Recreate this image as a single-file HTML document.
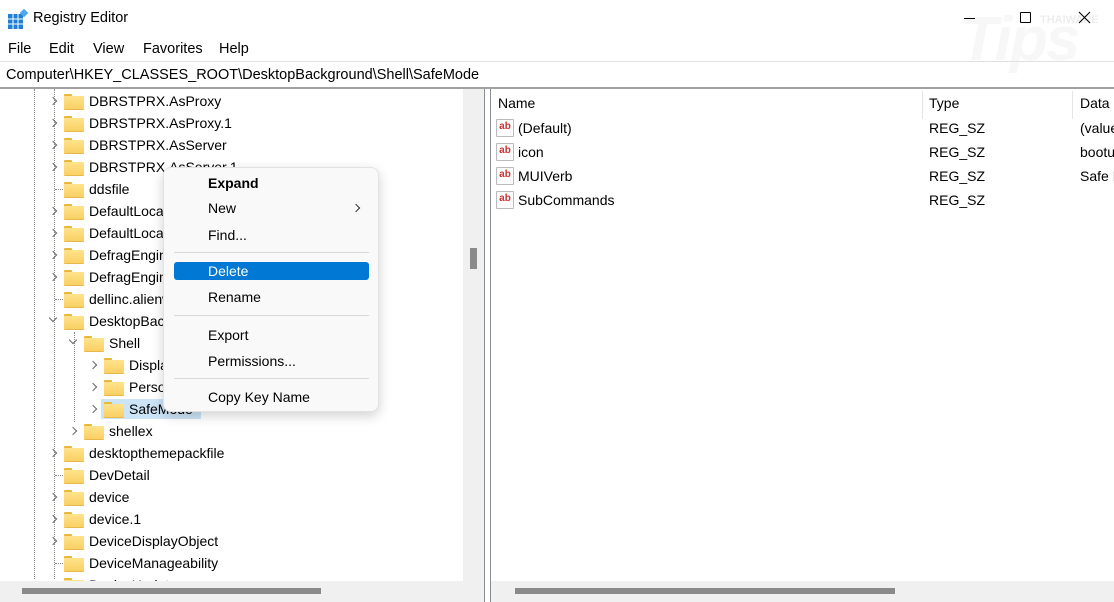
<!DOCTYPE html><html><head><style>
*{margin:0;padding:0;box-sizing:border-box}
body{width:1114px;height:602px;background:#fff;font-family:"Liberation Sans",sans-serif;font-size:14px;color:#000;position:relative;overflow:hidden}
.a{position:absolute;white-space:nowrap}
.f{position:absolute;width:20px;height:15px}
.f:before{content:"";position:absolute;left:0;top:0;width:8px;height:3px;background:#e9b73a;border-radius:1px 1px 0 0}
.f:after{content:"";position:absolute;left:0;top:2px;width:20px;height:13px;background:linear-gradient(#ffe38c,#f9d064);border-bottom:1px solid #e8b84a;border-radius:1px}
.ch{position:absolute;width:6px;height:6px;border-right:1.3px solid #666;border-bottom:1.3px solid #666}
.r{transform:rotate(-45deg)}.d{transform:rotate(45deg)}
.vl{position:absolute;border-left:1px dotted #888;width:0}
.hl{position:absolute;border-top:1px dotted #888;height:0}
.m{position:absolute;left:208px;font-size:14px}
.sep{position:absolute;left:174px;width:195px;height:1px;background:#d8d8d8}
.ab{position:absolute;width:18px;height:18px;background:#fff;border:1px solid #bbb;font-size:10px;font-weight:bold;color:#c33;text-align:center;line-height:13px;border-radius:1px}
</style></head><body>
<div class="a" style="left:960px;top:4px;font-size:62px;font-style:italic;font-weight:bold;color:#f7f7f7;letter-spacing:-2px">Tips</div>
<div class="a" style="left:1040px;top:14px;font-size:11px;font-weight:bold;color:#ededed">THAIWARE</div>
<svg class="a" style="left:8px;top:9px" width="20" height="20"><rect x="0" y="5" width="15" height="15" fill="#1f7fd6"/><g stroke="#fff" stroke-width="1"><line x1="5" y1="5" x2="5" y2="20"/><line x1="10" y1="5" x2="10" y2="20"/><line x1="0" y1="10" x2="15" y2="10"/><line x1="0" y1="15" x2="15" y2="15"/></g><rect x="13" y="1" width="6" height="6" fill="#4aa8f0" transform="rotate(45 16 4)"/></svg>
<div class="a" style="left:33px;top:10px;font-size:14.5px">Registry Editor</div>
<div class="a" style="left:964px;top:18px;width:11px;height:1px;background:#000"></div>
<div class="a" style="left:1020px;top:12px;width:11px;height:11px;border:1px solid #000;border-radius:1px"></div>
<svg class="a" style="left:1078px;top:11px" width="13" height="13"><path d="M1 1L12 12M12 1L1 12" stroke="#000" stroke-width="1.1"/></svg>
<div class="a" style="left:8px;top:41px;font-size:14.5px">File</div>
<div class="a" style="left:49px;top:41px;font-size:14.5px">Edit</div>
<div class="a" style="left:93px;top:41px;font-size:14.5px">View</div>
<div class="a" style="left:143px;top:41px;font-size:14.5px">Favorites</div>
<div class="a" style="left:219px;top:41px;font-size:14.5px">Help</div>
<div class="a" style="left:0;top:61px;width:1114px;height:1px;background:#e0e0e0"></div>
<div class="a" style="left:6px;top:67px;font-size:14.5px">Computer\HKEY_CLASSES_ROOT\DesktopBackground\Shell\SafeMode</div>
<div class="a" style="left:0;top:87px;width:1114px;height:2px;background:#a0a0a0"></div>
<div class="vl" style="left:34px;top:89px;height:490px"></div>
<div class="vl" style="left:54px;top:89px;height:490px"></div>
<div class="vl" style="left:74px;top:332px;height:90px"></div>
<div class="hl" style="left:55px;top:189px;width:8px"></div>
<div class="hl" style="left:55px;top:299px;width:8px"></div>
<div class="hl" style="left:55px;top:475px;width:8px"></div>
<div class="hl" style="left:55px;top:563px;width:8px"></div>
<div id="tree"></div>
<div class="a" style="left:463px;top:89px;width:21px;height:492px;background:#f0f0f0"></div>
<div class="a" style="left:470px;top:248px;width:7px;height:21px;background:#8a8a8a"></div>
<div class="a" style="left:484px;top:89px;width:1px;height:513px;background:#8a8e96"></div>
<div class="a" style="left:490px;top:89px;width:1px;height:513px;background:#8a8e96"></div>
<div class="a" style="left:0;top:581px;width:484px;height:21px;background:#f0f0f0"></div>
<div class="a" style="left:22px;top:588px;width:299px;height:6px;background:#8a8a8a"></div>
<div class="a" style="left:491px;top:581px;width:623px;height:21px;background:#f0f0f0"></div>
<div class="a" style="left:515px;top:588px;width:380px;height:6px;background:#8a8a8a"></div>
<div class="a" style="left:498px;top:95px">Name</div>
<div class="a" style="left:922px;top:91px;width:1px;height:28px;background:#e5e5e5"></div>
<div class="a" style="left:929px;top:95px">Type</div>
<div class="a" style="left:1072px;top:91px;width:1px;height:28px;background:#e5e5e5"></div>
<div class="a" style="left:1080px;top:95px">Data</div>
<div id="vals"></div>
<div class="a" style="left:163px;top:167px;width:216px;height:245px;background:#f9f9f9;border:1px solid #e2e2e2;border-radius:8px;box-shadow:0 4px 12px rgba(0,0,0,.18)"></div>
<div class="m" style="top:175px;font-weight:bold">Expand</div>
<div class="m" style="top:200px">New</div>
<div class="ch r a" style="left:353px;top:205px;border-color:#333"></div>
<div class="m" style="top:227px">Find...</div>
<div class="sep" style="top:252px"></div>
<div class="a" style="left:174px;top:262px;width:195px;height:18px;background:#0078d4;border-radius:3px"></div>
<div class="m" style="top:263px;color:#fff">Delete</div>
<div class="m" style="top:289px">Rename</div>
<div class="sep" style="top:315px"></div>
<div class="m" style="top:327px">Export</div>
<div class="m" style="top:353px">Permissions...</div>
<div class="sep" style="top:378px"></div>
<div class="m" style="top:389px">Copy Key Name</div>
<script>
var rows=[[1,'DBRSTPRX.AsProxy','r'],[1,'DBRSTPRX.AsProxy.1','r'],[1,'DBRSTPRX.AsServer','r'],[1,'DBRSTPRX.AsServer.1','r'],[1,'ddsfile',''],[1,'DefaultLocation','r'],[1,'DefaultLocation','r'],[1,'DefragEngine','r'],[1,'DefragEngine','r'],[1,'dellinc.alienware',''],[1,'DesktopBackground','d'],[2,'Shell','d'],[3,'DisplaySettings','r'],[3,'Personalize','r'],[3,'SafeMode','r',1],[2,'shellex','r'],[1,'desktopthemepackfile','r'],[1,'DevDetail',''],[1,'device','r'],[1,'device.1','r'],[1,'DeviceDisplayObject','r'],[1,'DeviceManageability',''],[1,'DeviceUpdate','r']];
var h='';rows.forEach(function(r,i){var c=101+22*i,x=64+(r[0]-1)*20;
if(r[3])h+='<div class="a" style="left:'+(x-3)+'px;top:'+(c-10)+'px;width:100px;height:20px;background:#cce4f7"></div>';
if(r[2]=='r')h+='<div class="ch r" style="left:'+(x-14)+'px;top:'+(c-3)+'px"></div>';
if(r[2]=='d')h+='<div class="ch d" style="left:'+(x-14)+'px;top:'+(c-6)+'px"></div>';
h+='<div class="f" style="left:'+x+'px;top:'+(c-7)+'px"></div><div class="a" style="left:'+(x+25)+'px;top:'+(c-8)+'px;font-size:14px">'+r[1]+'</div>';});
document.getElementById('tree').innerHTML='<div class="a" style="left:0;top:89px;width:463px;height:492px;overflow:hidden">'+h.replace(/top:(\d+)px/g,function(m,n){return 'top:'+(n-89)+'px'})+'</div>';
var v=[['(Default)','(value not set)'],['icon','bootux.dll'],['MUIVerb','Safe Mode'],['SubCommands','']],g='';
v.forEach(function(r,i){var c=128+24*i;g+='<div class="ab" style="left:496px;top:'+(c-9)+'px">ab</div><div class="a" style="left:518px;top:'+(c-8)+'px">'+r[0]+'</div><div class="a" style="left:929px;top:'+(c-8)+'px">REG_SZ</div><div class="a" style="left:1080px;top:'+(c-8)+'px">'+r[1]+'</div>';});
document.getElementById('vals').innerHTML=g;
</script>
</body></html>
